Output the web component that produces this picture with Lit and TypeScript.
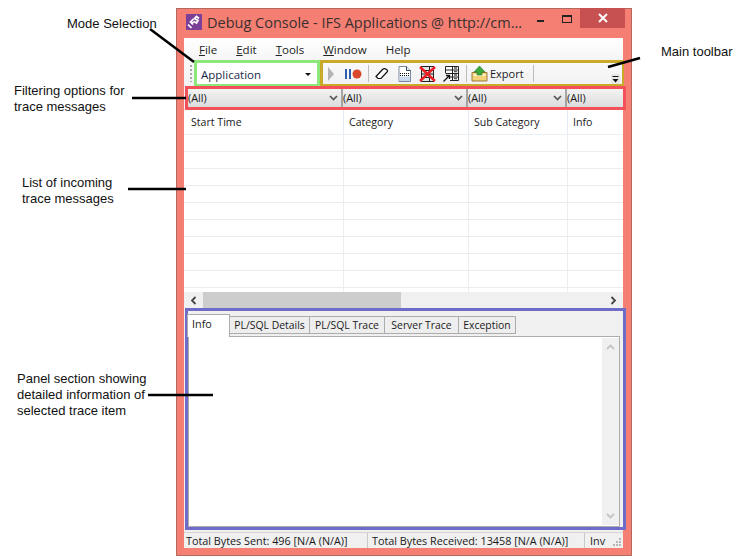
import { LitElement, css, html } from 'lit';
import { customElement } from 'lit/decorators.js';

const filters = [
  { label: '(All)', width: 155 },
  { label: '(All)', width: 125 },
  { label: '(All)', width: 99 },
  { label: '(All)', width: 56 },
];

const columns = [
  { label: 'Start Time', width: 160 },
  { label: 'Category', width: 125 },
  { label: 'Sub Category', width: 99 },
  { label: 'Info', width: 55 },
];

const tabs = [
  { label: 'PL/SQL Details', width: 80 },
  { label: 'PL/SQL Trace', width: 75 },
  { label: 'Server Trace', width: 74 },
  { label: 'Exception', width: 57 },
];

const notes = [
  { cls: 'n-mode', lines: ['Mode Selection'] },
  { cls: 'n-main', lines: ['Main toolbar'] },
  { cls: 'n-filter', lines: ['Filtering options for', 'trace messages'] },
  { cls: 'n-list', lines: ['List of incoming', 'trace messages'] },
  { cls: 'n-panel', lines: ['Panel section showing', 'detailed information of', 'selected trace item'] },
];

@customElement('app-root')
export class AppRoot extends LitElement {
  static styles = css`
    :host {
      display: block;
      position: relative;
      width: 737px;
      height: 559px;
      overflow: hidden;
      background: #fff;
      font-family: 'Open Sans', 'Noto Sans', sans-serif;
      font-size: 10.8px;
      color: #1a1a1a;
    }
    .window {
      position: absolute;
      left: 176px;
      top: 8px;
      width: 456px;
      height: 548px;
      box-sizing: border-box;
      background: #f67f73;
      border: 1px solid #b5685f;
      display: flex;
      flex-direction: column;
    }
    .titlebar {
      height: 29px;
      flex: none;
      display: flex;
      align-items: flex-start;
    }
    .app-icon {
      flex: none;
      margin: 5px 0 0 9px;
      width: 16px;
      height: 16px;
    }
    .title {
      margin: 3px 0 0 5px;
      font-size: 14.5px;
      line-height: 22px;
      color: #3a3030;
      white-space: nowrap;
    }
    .ctrl {
      margin-left: auto;
      display: flex;
      padding-right: 6px;
    }
    .min {
      width: 7px;
      height: 2px;
      background: #222;
      margin: 11px 0 0 0;
    }
    .max {
      width: 8px;
      height: 5px;
      border: 1px solid #222;
      border-top-width: 2px;
      margin: 6px 8px 0 18px;
    }
    .close {
      width: 45px;
      height: 20px;
      margin-top: -1px;
      background: #c75050;
      display: flex;
      align-items: center;
      justify-content: center;
    }
    .client {
      flex: none;
      width: 439px;
      margin-left: 7px;
      height: 510px;
      background: #f0f0f0;
      display: flex;
      flex-direction: column;
    }
    .menu {
      height: 22px;
      flex: none;
      background: linear-gradient(#ffffff, #f5f5f6);
      display: flex;
      align-items: center;
      padding-left: 15px;
      gap: 19px;
      font-size: 11.5px;
      color: #222;
    }
    .menu u {
      text-underline-offset: 1px;
    }
    .tools {
      height: 26px;
      flex: none;
      display: flex;
      background: linear-gradient(#fafafa, #f1f1f3);
    }
    .grip {
      width: 2px;
      margin: 5px 2px 0 6px;
      height: 17px;
      background: repeating-linear-gradient(#a8a8a8 0 2px, transparent 2px 4px);
      flex: none;
    }
    .mode {
      width: 126px;
      box-sizing: border-box;
      border: 3px solid #8ce878;
      border-bottom-width: 2px;
      background: #fff;
      display: flex;
      align-items: center;
      justify-content: space-between;
      padding: 1px 6px 0 4px;
      font-size: 11.5px;
      color: #1b2a4a;
      flex: none;
    }
    .caret {
      width: 0;
      height: 0;
      border: 3px solid transparent;
      border-top: 3px solid #111;
      border-bottom-width: 0;
    }
    .bar {
      flex: none;
      width: 304px;
      box-sizing: border-box;
      border: solid #c9a928;
      border-width: 3px 2px 2px 3px;
      display: flex;
      align-items: center;
      padding-left: 4px;
      position: relative;
      font-size: 11px;
    }
    .bar svg {
      flex: none;
      display: block;
    }
    .sep {
      width: 1px;
      height: 17px;
      background: #bdbdbd;
      flex: none;
    }
    .overflow {
      position: absolute;
      right: 2px;
      bottom: 0;
      width: 9px;
      height: 10px;
    }
    .filters {
      flex: none;
      height: 24px;
      width: 441px;
      margin-left: 1px;
      box-sizing: border-box;
      border: 3px solid #f4505a;
      display: flex;
      background: linear-gradient(#f3f3f3, #dcdcdc);
      color: #1a1a1a;
    }
    .filter {
      flex: none;
      box-sizing: border-box;
      border-right: 2px solid #a5a5a5;
      display: flex;
      align-items: center;
      justify-content: space-between;
      padding: 0 3px 0 0;
      line-height: 18px;
    }
    .filter:last-child {
      border-right: 0;
    }
    .head {
      flex: none;
      height: 24px;
      display: flex;
      background: #fff;
      border-bottom: 1px solid #eaf0f6;
      font-size: 10.6px;
    }
    .head div {
      flex: none;
      box-sizing: border-box;
      border-right: 1px solid #e4ebf2;
      padding: 4px 0 0 5px;
      line-height: 16px;
    }
    .head div:first-child {
      padding-left: 7px;
    }
    .head div:last-child {
      border-right: 0;
    }
    .rows {
      flex: none;
      height: 157px;
      background: #fff;
      overflow: hidden;
    }
    .row {
      height: 17px;
      box-sizing: border-box;
      border-bottom: 1px solid #ececec;
      display: flex;
    }
    .row span {
      flex: none;
      box-sizing: border-box;
      border-right: 1px solid #ececec;
    }
    .row span:last-child {
      border-right: 0;
    }
    .hscroll {
      flex: none;
      height: 16px;
      display: flex;
      align-items: stretch;
      background: #f0f0f0;
    }
    .arrow {
      flex: none;
      width: 19px;
      display: flex;
      align-items: center;
      justify-content: center;
    }
    .thumb {
      flex: none;
      width: 198px;
      background: #cdcdcd;
    }
    .spacer {
      flex: 1;
    }
    .details {
      flex: none;
      width: 441px;
      height: 222px;
      margin: 0 0 0 1px;
      box-sizing: border-box;
      border: 3px solid #6f6bc8;
      background: #f0f0f0;
      display: flex;
      flex-direction: column;
    }
    .tabs {
      flex: none;
      height: 25px;
      display: flex;
      align-items: flex-end;
      font-size: 10.4px;
      position: relative;
      z-index: 1;
    }
    .tab {
      box-sizing: border-box;
      height: 18px;
      margin-bottom: 2px;
      border: 1px solid #acacac;
      border-left-width: 0;
      text-align: center;
      line-height: 16px;
      background: #eee;
      white-space: nowrap;
    }
    .tab.on {
      height: 23px;
      margin-bottom: -1px;
      margin-left: -1px;
      width: 43px;
      padding: 0 0 0 4px;
      text-align: left;
      border-left-width: 1px;
      border-bottom: 0;
      background: #fff;
      line-height: 17px;
      font-size: 10.8px;
    }
    .pane {
      flex: 1;
      box-sizing: border-box;
      border: 1px solid #acacac;
      background: #fff;
      display: flex;
      justify-content: flex-end;
      padding: 1px 0 1px 1px;
      margin: 0 3px 0 0;
    }
    .vscroll {
      width: 17px;
      background: #f0f0f0;
      display: flex;
      flex-direction: column;
      justify-content: space-between;
      align-items: center;
      padding: 6px 0;
    }
    .status {
      flex: 1;
      margin-top: 2px;
      border-top: 1px solid #d4d4d4;
      display: flex;
      align-items: center;
      font-size: 10.8px;
      background: #f0f0f0;
      position: relative;
      white-space: nowrap;
    }
    .status div {
      flex: none;
      box-sizing: border-box;
      padding-left: 2px;
      border-right: 1px solid #c8c8c8;
      line-height: 15px;
    }
    .status div.second {
      padding-left: 4px;
    }
    .status div.last {
      border-right: 0;
      padding-left: 5px;
    }
    .resize {
      position: absolute;
      right: 1px;
      bottom: 1px;
    }
    .lines {
      position: absolute;
      left: 0;
      top: 0;
    }
    .note {
      position: absolute;
      font-family: 'Liberation Sans', Arial, sans-serif;
      font-size: 13px;
      line-height: 16px;
      color: #111;
      white-space: nowrap;
    }
    .n-mode { left: 67px; top: 16px; }
    .n-main { left: 661px; top: 44px; }
    .n-filter { left: 14px; top: 83px; }
    .n-list { left: 22px; top: 175px; }
    .n-panel { left: 17px; top: 371px; }
  `;

  render() {
    return html`
      <div class="window">
        <div class="titlebar">
          <svg class="app-icon" viewBox="0 0 16 16">
            <rect width="16" height="16" fill="#7b3f98" />
            <g fill="none" stroke="#fff" stroke-width="1.7">
              <path d="M2 10.500l3.500 3.500" />
              <path d="M7 10.500l-2.500 -2.500l3 -3M5.500 9l2.500 -1" />
              <path d="M13 4.500l-2.500 -2l-2 2l3.500 2l-1.500 2.500l-2.500 -1.500" />
            </g>
          </svg>
          <div class="title">Debug Console - IFS Applications @ http://cm...</div>
          <div class="ctrl">
            <div class="min"></div>
            <div class="max"></div>
            <div class="close">
              <svg width="10" height="10" viewBox="0 0 10 10">
                <path d="M1 1l8 8M9 1l-8 8" stroke="#fff" stroke-width="2" />
              </svg>
            </div>
          </div>
        </div>
        <div class="client">
          <div class="menu">
            <span><u>F</u>ile</span>
            <span><u>E</u>dit</span>
            <span><u>T</u>ools</span>
            <span><u>W</u>indow</span>
            <span>Help</span>
          </div>
          <div class="tools">
            <div class="grip"></div>
            <div class="mode">Application<span class="caret"></span></div>
            <div class="bar">${this.toolbar()}</div>
          </div>
          <div class="filters">
            ${filters.map(
              (f, i) => html`<div class="filter" style="width:${f.width}px">
                ${f.label}${i < 3 ? this.chevron() : ''}
              </div>`,
            )}
          </div>
          <div class="head">
            ${columns.map((c) => html`<div style="width:${c.width}px">${c.label}</div>`)}
          </div>
          <div class="rows">
            ${[0, 1, 2, 3, 4, 5, 6, 7, 8, 9].map(
              () => html`<div class="row">
                ${columns.map((c) => html`<span style="width:${c.width}px"></span>`)}
              </div>`,
            )}
          </div>
          <div class="hscroll">
            <div class="arrow">
              <svg width="7" height="9" viewBox="0 0 7 9"><path d="M5.500 1l-3.500 3.500l3.500 3.500" fill="none" stroke="#444" stroke-width="1.800" /></svg>
            </div>
            <div class="thumb"></div>
            <div class="spacer"></div>
            <div class="arrow">
              <svg width="7" height="9" viewBox="0 0 7 9"><path d="M1.500 1l3.500 3.500l-3.500 3.500" fill="none" stroke="#444" stroke-width="1.800" /></svg>
            </div>
          </div>
          <div class="details">
            <div class="tabs">
              <div class="tab on">Info</div>
              ${tabs.map((t) => html`<div class="tab" style="width:${t.width}px">${t.label}</div>`)}
            </div>
            <div class="pane">
              <div class="vscroll">
                <svg width="9" height="6" viewBox="0 0 9 6"><path d="M1 5l3.500 -3.500l3.500 3.500" fill="none" stroke="#c4c4c4" stroke-width="1.800" /></svg>
                <svg width="9" height="6" viewBox="0 0 9 6"><path d="M1 1l3.500 3.500l3.500 -3.500" fill="none" stroke="#c4c4c4" stroke-width="1.800" /></svg>
              </div>
            </div>
          </div>
          <div class="status">
            <div style="width:184px">Total Bytes Sent: 496 [N/A (N/A)]</div>
            <div class="second" style="width:217px">Total Bytes Received: 13458 [N/A (N/A)]</div>
            <div class="last" style="width:23px">Inv</div>
            <svg class="resize" width="10" height="10" viewBox="0 0 10 10" fill="#b5b5b5">
              <rect x="7" y="1" width="2" height="2" />
              <rect x="4" y="4" width="2" height="2" />
              <rect x="7" y="4" width="2" height="2" />
              <rect x="1" y="7" width="2" height="2" />
              <rect x="4" y="7" width="2" height="2" />
              <rect x="7" y="7" width="2" height="2" />
            </svg>
          </div>
        </div>
      </div>

      <svg class="lines" width="737" height="559" fill="none" stroke="#000" stroke-width="2.500">
        <path d="M150 29L194 62" />
        <path d="M608 67L640 58" />
        <path d="M132 98H186" />
        <path d="M128 189H186" />
        <path d="M148 395H213" />
      </svg>
      ${notes.map(
        (n) => html`<div class="note ${n.cls}">${n.lines.map((l) => html`${l}<br />`)}</div>`,
      )}
    `;
  }

  chevron() {
    return html`<svg width="9" height="6" viewBox="0 0 9 6">
      <path d="M1 1l3.500 3.500l3.500 -3.500" fill="none" stroke="#555" stroke-width="1.700" />
    </svg>`;
  }

  toolbar() {
    return html`
      <svg width="8" height="14" viewBox="0 0 8 14">
        <path d="M1 0l6 7l-6 7z" fill="#b4b4b4" />
      </svg>
      <svg width="17" height="10" viewBox="0 0 17 10" style="margin-left:10px">
        <rect x="0" y="0" width="2" height="10" fill="#2f5fb0" />
        <rect x="4" y="0" width="2" height="10" fill="#2f5fb0" />
        <circle cx="12" cy="5" r="4.500" fill="#d9482b" />
      </svg>
      <div class="sep" style="margin-left:6px"></div>
      <svg width="14" height="12" viewBox="0 0 14 12" style="margin-left:6px">
        <path d="M1 8.500L7.500 1.500c1-1 2.500-1 4 0c1 .7 1.500 1.500.5 2.500L6 10.500H3z" fill="#fff" stroke="#111" stroke-width="1.200" />
      </svg>
      <svg width="13" height="16" viewBox="0 0 13 16" style="margin-left:9px">
        <path d="M1 .5h7.500l4 4v11H1z" fill="#fff" stroke="#7a8aa0" />
        <path d="M8.500 .5v4h4" fill="#e8eef6" stroke="#3a4a66" />
        <path d="M1.500 10.500h10.500v4.500H1.500z" fill="#c9d8ec" />
        <path d="M2 7.500h9M2 9.500h9" stroke="#111" stroke-dasharray="1 1" />
      </svg>
      <svg width="17" height="16" viewBox="0 0 17 16" style="margin-left:8px">
        <rect x="2.500" y=".5" width="12" height="15" fill="#e4e4e4" stroke="#222" />
        <path d="M3 4.500h11M3 8h11M3 11.500h11M10.500 1v14" stroke="#222" />
        <path d="M1 1l15 14M16 1L1 15" stroke="#ea1c24" stroke-width="2.400" />
      </svg>
      <svg width="16" height="16" viewBox="0 0 16 16" style="margin-left:7px">
        <path d="M2.500 7.500V.5h13v14H7" fill="#fff" stroke="#222" />
        <path d="M9.500 1v13M3 4h12M3 7.500h12M7 11h8" stroke="#222" />
        <path d="M11 2h3M11 5.500h3M11 9h3M11 12.500h3" stroke="#555" stroke-width="1.500" />
        <path d="M.5 15.500l6 -6M3 9.500h3.500v3.500" fill="none" stroke="#111" stroke-width="1.300" />
      </svg>
      <div class="sep" style="margin-left:7px"></div>
      <svg width="17" height="16" viewBox="0 0 17 16" style="margin-left:4px">
        <path d="M1 6.500h15v8.500H1z" fill="#f3d27a" stroke="#9a7a3a" />
        <path d="M2.500 9h12" stroke="#fff2c4" stroke-width="2" />
        <path d="M8.500 0L14 6h-3v3H6V6H3z" fill="#3aa83a" stroke="#2a7a2a" stroke-width=".6" />
      </svg>
      <span style="margin-left:2px">Export</span>
      <div class="sep" style="margin-left:9px"></div>
      <svg class="overflow" viewBox="0 0 9 10">
        <rect width="9" height="10" fill="#e8e8e8" />
        <path d="M1.500 2.500h6" stroke="#111" />
        <path d="M1.500 5h6l-3 3.500z" fill="#111" />
      </svg>
    `;
  }
}
